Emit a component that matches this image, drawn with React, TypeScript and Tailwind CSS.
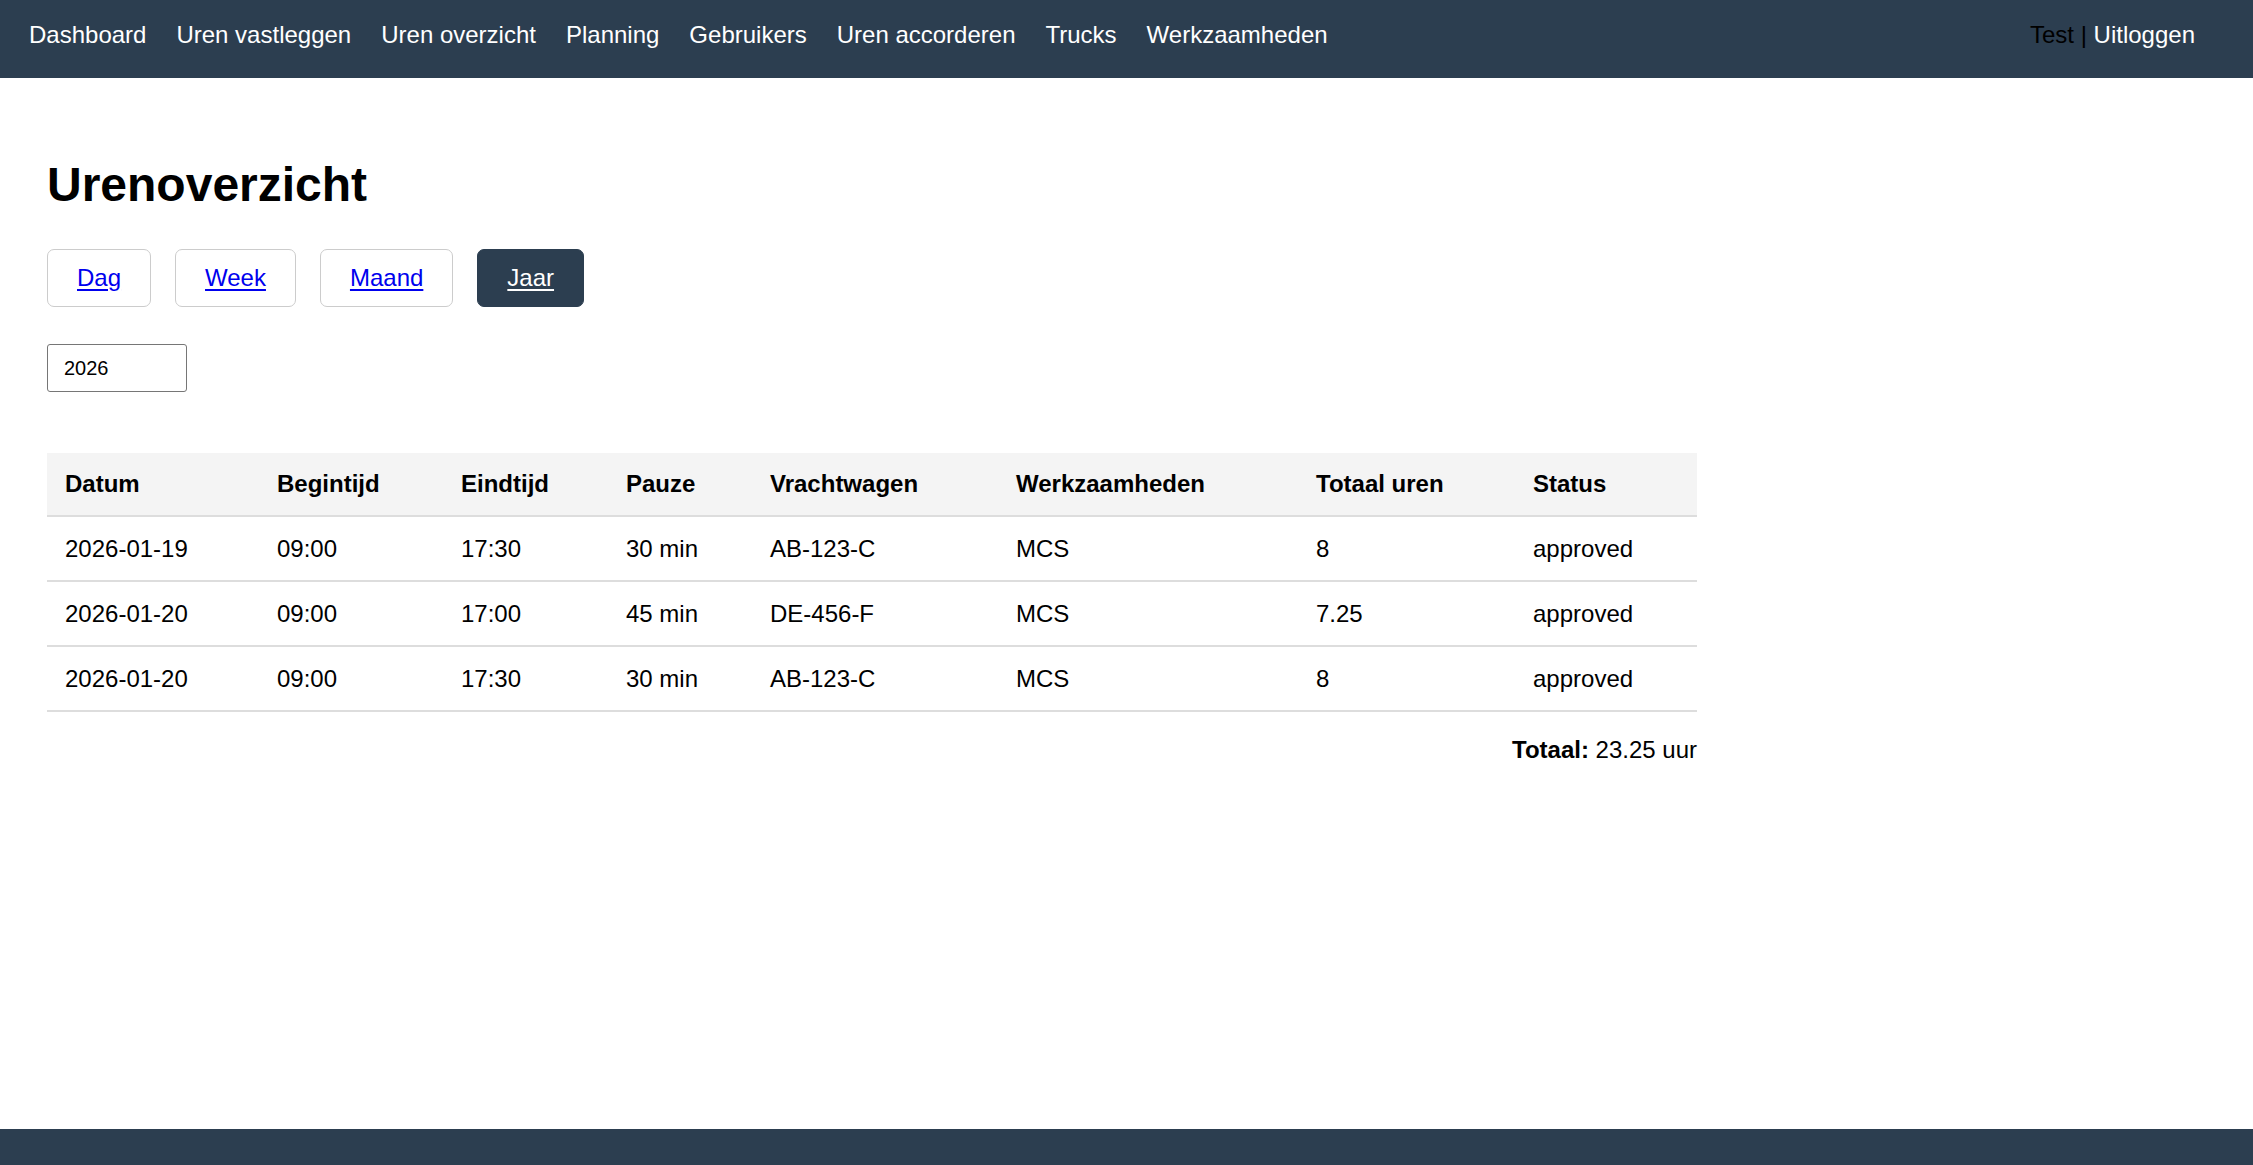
const navLinks = [
  'Dashboard',
  'Uren vastleggen',
  'Uren overzicht',
  'Planning',
  'Gebruikers',
  'Uren accorderen',
  'Trucks',
  'Werkzaamheden',
];

const periods = ['Dag', 'Week', 'Maand', 'Jaar'];

const rows = [
  { datum: '2026-01-19', begin: '09:00', eind: '17:30', pauze: '30 min', truck: 'AB-123-C', werk: 'MCS', totaal: '8', status: 'approved' },
  { datum: '2026-01-20', begin: '09:00', eind: '17:00', pauze: '45 min', truck: 'DE-456-F', werk: 'MCS', totaal: '7.25', status: 'approved' },
  { datum: '2026-01-20', begin: '09:00', eind: '17:30', pauze: '30 min', truck: 'AB-123-C', werk: 'MCS', totaal: '8', status: 'approved' },
];

const columns = [
  { label: 'Datum', w: 'w-[212px]' },
  { label: 'Begintijd', w: 'w-[184px]' },
  { label: 'Eindtijd', w: 'w-[165px]' },
  { label: 'Pauze', w: 'w-[144px]' },
  { label: 'Vrachtwagen', w: 'w-[246px]' },
  { label: 'Werkzaamheden', w: 'w-[300px]' },
  { label: 'Totaal uren', w: 'w-[217px]' },
  { label: 'Status', w: 'w-[182px]' },
];

export default function App() {
  const active = 'Jaar';

  return (
    <div className="min-h-screen flex flex-col bg-white text-black font-['Liberation_Sans',Arial,sans-serif] text-[24px]">
      {/* Top navigation */}
      <nav className="h-[78px] bg-[#2c3e50] flex items-start justify-between pl-[29px] pr-[58px] pt-[21px]">
        <div className="flex gap-[30px]">
          {navLinks.map((l) => (
            <a key={l} href="#" className="text-white no-underline leading-[27.6px]">
              {l}
            </a>
          ))}
        </div>
        <div className="leading-[27.6px] text-black">
          Test | <a href="#" className="text-white no-underline">Uitloggen</a>
        </div>
      </nav>

      {/* Main content */}
      <main className="flex-1 pl-[47px] pt-[79px]">
        <div className="w-[1650px]">
          <h1 className="text-[48px] font-bold leading-[55px]">Urenoverzicht</h1>

          <div className="flex gap-[24px] mt-[37px]">
            {periods.map((p) => (
              <a
                key={p}
                href="#"
                className={
                  p === active
                    ? 'h-[58px] px-[29px] flex items-center rounded-[7px] bg-[#2c3e50] border border-[#2c3e50] text-white underline underline-offset-[3px]'
                    : 'h-[58px] px-[29px] flex items-center rounded-[7px] border border-[#cccccc] text-[#0000ee] underline underline-offset-[3px]'
                }
              >
                {p}
              </a>
            ))}
          </div>

          <div className="mt-[37px]">
            <input
              type="text"
              defaultValue="2026"
              className="w-[140px] h-[48px] border border-[#767676] rounded-[3px] px-[16px] text-[20px] text-black outline-none"
            />
          </div>

          <table className="mt-[61px] w-[1650px] table-fixed border-collapse text-left">
            <thead>
              <tr className="bg-[#f4f4f4] border-b-2 border-[#dddddd]">
                {columns.map((c) => (
                  <th key={c.label} className={`${c.w} px-[18px] h-[63px] font-bold`}>
                    {c.label}
                  </th>
                ))}
              </tr>
            </thead>
            <tbody>
              {rows.map((r, i) => (
                <tr key={i} className="border-b-2 border-[#dddddd]">
                  <td className="px-[18px] h-[65px]">{r.datum}</td>
                  <td className="px-[18px]">{r.begin}</td>
                  <td className="px-[18px]">{r.eind}</td>
                  <td className="px-[18px]">{r.pauze}</td>
                  <td className="px-[18px]">{r.truck}</td>
                  <td className="px-[18px]">{r.werk}</td>
                  <td className="px-[18px]">{r.totaal}</td>
                  <td className="px-[18px]">{r.status}</td>
                </tr>
              ))}
            </tbody>
          </table>

          <p className="mt-[24px] text-right leading-[27.6px]">
            <strong>Totaal:</strong> 23.25 uur
          </p>
        </div>
      </main>

      {/* Footer */}
      <footer className="h-[36px] bg-[#2c3e50]" />
    </div>
  );
}
